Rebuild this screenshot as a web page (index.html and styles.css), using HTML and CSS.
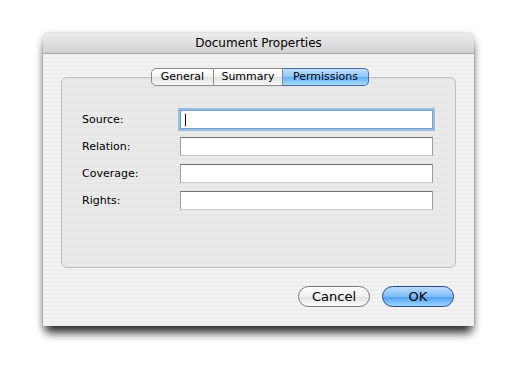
FILE: index.html
```html
<!doctype html>
<html lang="en">
<head>
  <title>Document Properties</title>
  <meta charset="utf-8" />
  <link rel="stylesheet" href="styles.css">
</head>
<body>
  <div class="window">
    <div class="titlebar">Document Properties</div>

    <div class="content">
      <div class="tabs">
        <span class="tab">General</span>
        <span class="tab">Summary</span>
        <span class="tab active">Permissions</span>
      </div>

      <div class="group">
        <div class="row">
          <label>Source:</label>
          <div class="field focused"><span class="caret"></span></div>
        </div>
        <div class="row">
          <label>Relation:</label>
          <div class="field"></div>
        </div>
        <div class="row">
          <label>Coverage:</label>
          <div class="field"></div>
        </div>
        <div class="row">
          <label>Rights:</label>
          <div class="field"></div>
        </div>
      </div>

      <div class="buttons">
        <span class="button">Cancel</span>
        <span class="button default">OK</span>
      </div>
    </div>
  </div>
</body>
</html>
```

FILE: styles.css
```css
* {
  box-sizing: border-box;
}

html,
body {
  margin: 0;
  padding: 0;
  background: white;
  font-family: "DejaVu Sans", "Liberation Sans", sans-serif;
  color: #000;
}

body {
  min-height: 100vh;
  padding: 33px 0 0 43px;
}

.window {
  width: 431px;
  height: 293px;
  border-radius: 6px 6px 0 0;
  background:
    repeating-linear-gradient(
      to bottom,
      #ededed 0,
      #ededed 2px,
      #f3f3f3 2px,
      #f3f3f3 4px
    );
  box-shadow:
    0 10px 10px -3px rgba(0, 0, 0, 0.75),
    0 3px 9px rgba(0, 0, 0, 0.3),
    0 0 1px rgba(0, 0, 0, 0.5);
  display: flex;
  flex-direction: column;
}

.titlebar {
  height: 21px;
  border-radius: 6px 6px 0 0;
  background: linear-gradient(#ececec, #d2d2d2);
  border-bottom: 1px solid #a8a8a8;
  text-align: center;
  font-size: 12px;
  line-height: 21px;
}

.content {
  padding: 14px 18px 0 18px;
}

.tabs {
  display: flex;
  justify-content: center;
  margin-left: 3px;
  position: relative;
  z-index: 1;
  height: 18px;
}

.tab {
  height: 18px;
  line-height: 16px;
  font-size: 11px;
  text-align: center;
  border: 1px solid #8a8a8a;
  border-left: none;
  background: linear-gradient(#ffffff, #f2f2f2 50%, #e2e2e2 51%, #f6f6f6);
}

.tab:nth-child(1) {
  width: 63px;
  border-left: 1px solid #8a8a8a;
  border-radius: 5px 0 0 5px;
}

.tab:nth-child(2) {
  width: 69px;
}

.tab:nth-child(3) {
  width: 86px;
  border-radius: 0 5px 5px 0;
}

.tab.active {
  border-color: #4a6fa8;
  background: linear-gradient(#bfe0ff, #8dc5fb 50%, #62aef7 51%, #a8dcff);
}

.group {
  margin-top: -9px;
  height: 191px;
  border: 1px solid #bdbdbd;
  border-radius: 6px;
  background:
    repeating-linear-gradient(
      to bottom,
      #e6e6e6 0,
      #e6e6e6 2px,
      #eaeaea 2px,
      #eaeaea 4px
    );
  padding: 32px 22px 0 20px;
}

.row {
  display: flex;
  align-items: center;
  height: 19px;
  margin-bottom: 8px;
  font-size: 11px;
}

.row label {
  width: 98px;
}

.field {
  width: 254px;
  height: 19px;
  background: white;
  border: 1px solid #9c9c9c;
  border-top-color: #6f6f6f;
  border-bottom-color: #c8c8c8;
  position: relative;
}

.field.focused {
  border-color: #7a9cc8;
  box-shadow: 0 0 0 2px #9cbde3;
}

.caret {
  position: absolute;
  left: 4px;
  top: 3px;
  width: 1px;
  height: 12px;
  background: black;
}

.buttons {
  display: flex;
  justify-content: flex-end;
  gap: 12px;
  margin-top: 18px;
  padding-right: 2px;
}

.button {
  width: 72px;
  height: 21px;
  line-height: 19px;
  text-align: center;
  font-size: 13px;
  border: 1px solid #777;
  border-radius: 11px;
  background: linear-gradient(#fdfdfd, #f0f0f0 50%, #dedede 51%, #ffffff);
}

.button.default {
  border-color: #2b4a8c;
  background: linear-gradient(#b9dcff, #7fbdf8 50%, #4b9ef2 51%, #9cd6ff);
}
```
